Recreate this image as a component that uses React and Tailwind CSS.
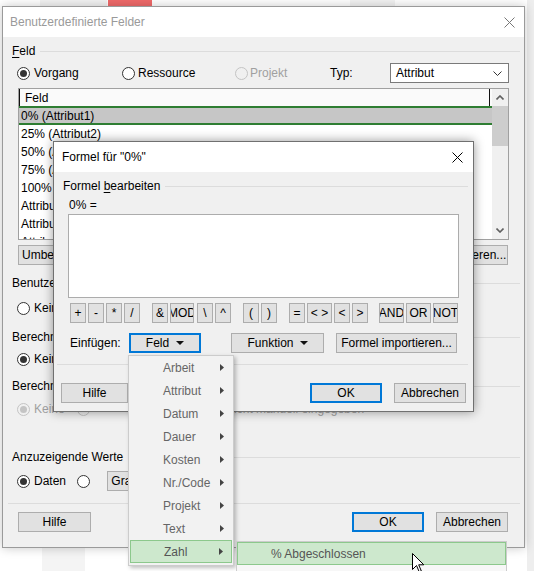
import React from "react";

const Radio = ({ checked, disabled }) => (
  <span
    className={
      "w-[13px] h-[13px] rounded-full border flex items-center justify-center shrink-0 " +
      (disabled ? "border-[#c4c4c4] bg-[#f0f0f0]" : "border-[#333333] bg-white")
    }
  >
    {checked && (
      <span className={"w-[7px] h-[7px] rounded-full " + (disabled ? "bg-[#c4c4c4]" : "bg-[#333333]")} />
    )}
  </span>
);

const Btn = ({ className = "", children, def }) => (
  <div
    className={
      "h-[20px] flex items-center justify-center bg-[#e1e1e1] shrink-0 whitespace-nowrap overflow-hidden text-black " +
      (def ? "border-2 border-[#0078d7] " : "border border-[#adadad] ") +
      className
    }
  >
    {children}
  </div>
);

const Group = ({ children }) => (
  <div className="h-[14px] flex items-center">
    <span className="whitespace-nowrap">{children}</span>
    <div className="flex-1 h-px bg-[#dcdcdc] ml-[5px]" />
  </div>
);

const CloseX = ({ color }) => (
  <svg width="11" height="11" viewBox="0 0 11 11">
    <path d="M0.5 0.5 L10.5 10.5 M10.5 0.5 L0.5 10.5" stroke={color} strokeWidth="1" />
  </svg>
);

const Tri = () => (
  <svg width="4" height="7" viewBox="0 0 4 7">
    <path d="M0 0 L4 3.5 L0 7 Z" fill="#444444" />
  </svg>
);

const Down = () => (
  <svg width="8" height="4" viewBox="0 0 8 4">
    <path d="M0 0 L8 0 L4 4 Z" fill="#111111" />
  </svg>
);

const listRows = [
  "25% (Attribut2)",
  "50% (Attribut3)",
  "75% (Attribut4)",
  "100% (Attribut5)",
  "Attribut6",
  "Attribut7",
  "Attribut8",
];

const menuItems = ["Arbeit", "Attribut", "Datum", "Dauer", "Kosten", "Nr./Code", "Projekt", "Text"];

const ops = [
  ["+", 16, 0],
  ["-", 16, 2],
  ["*", 16, 2],
  ["/", 16, 2],
  ["&", 16, 12],
  ["MOD", 24, 2],
  ["\\", 16, 3],
  ["^", 16, 2],
  ["(", 16, 12],
  [")", 16, 2],
  ["=", 16, 12],
  ["< >", 25, 2],
  ["<", 16, 2],
  [">", 16, 2],
  ["AND", 25, 11],
  ["OR", 25, 2],
  ["NOT", 25, 2],
];

export default function App() {
  return (
    <div className="relative w-[534px] h-[571px] overflow-hidden bg-white text-[12px] leading-none text-black font-['Liberation_Sans',Arial,sans-serif]">
      {/* desktop background bits */}
      <div className="absolute left-[40px] top-0 w-[67px] h-[6px] bg-[#f3f3f3]" />
      <div className="absolute left-[108px] top-0 w-[44px] h-[6px] bg-[#f06a6a]" />
      <div className="absolute left-[350px] top-0 w-[45px] h-[6px] bg-[#f3f3f3]" />
      <div className="absolute left-[527px] top-0 w-[7px] h-[571px] bg-[#eeeeee]" />
      <div className="absolute left-[42px] top-[548px] w-[43px] h-[23px] bg-[#f4f4f4]" />

      {/* outer dialog */}
      <div className="absolute left-[2px] top-[6px] w-[523px] h-[542px] border border-[#9a9a9a] bg-[#f0f0f0] shadow-[0_0_10px_rgba(0,0,0,0.22)] flex flex-col">
        <div className="h-[30px] bg-white flex items-center pl-[7px] shrink-0">
          <span className="text-[#9a9a9a]">Benutzerdefinierte Felder</span>
          <div className="ml-auto mr-[9px] flex">
            <CloseX color="#777777" />
          </div>
        </div>
        <div className="flex-1 pl-[9px] pr-[4px] flex flex-col">
          <div className="mt-[7px]">
            <Group>
              <span className="underline underline-offset-2">F</span>eld
            </Group>
          </div>

          <div className="mt-[8px] h-[14px] flex items-center">
            <div className="ml-[5px] w-[105px] flex items-center gap-[4px]">
              <Radio checked />
              <span>Vorgang</span>
            </div>
            <div className="w-[113px] flex items-center gap-[3px]">
              <Radio />
              <span>Ressource</span>
            </div>
            <div className="w-[95px] flex items-center gap-[2px]">
              <Radio disabled />
              <span className="text-[#a0a0a0]">Projekt</span>
            </div>
            <div className="w-[60px]">Typ:</div>
            <div className="w-[119px] h-[20px] border border-[#7a7a7a] bg-white flex items-center pl-[5px] pr-[6px]">
              <span>Attribut</span>
              <svg className="ml-auto" width="9" height="5" viewBox="0 0 9 5">
                <path d="M0.5 0.5 L4.5 4.5 L8.5 0.5" stroke="#333333" strokeWidth="1" fill="none" />
              </svg>
            </div>
          </div>

          {/* list */}
          <div className="mt-[8px] ml-[6px] w-[491px] h-[152px] border border-[#a0a0a0] bg-white flex overflow-hidden">
            <div className="w-[474px] flex flex-col">
              <div className="h-[17px] flex shrink-0 bg-[#fafafa]">
                <div className="w-[471px] border-l border-r border-[#111111] flex items-center pl-[5px]">Feld</div>
              </div>
              <div className="h-[19px] shrink-0 border-y-2 border-[#2e7d32] bg-[#c6c6c6] flex items-center pl-[2px]">
                0% (Attribut1)
              </div>
              {listRows.map((r) => (
                <div key={r} className="h-[18px] shrink-0 flex items-center pl-[2px]">
                  {r}
                </div>
              ))}
            </div>
            <div className="w-[16px] bg-[#f0f0f0] flex flex-col">
              <div className="h-[17px] flex items-center justify-center shrink-0">
                <svg width="8" height="5" viewBox="0 0 8 5">
                  <path d="M0.5 4.5 L4 1 L7.5 4.5" stroke="#606060" strokeWidth="1.6" fill="none" />
                </svg>
              </div>
              <div className="h-[40px] bg-[#cdcdcd] shrink-0" />
              <div className="flex-1" />
              <div className="h-[17px] flex items-center justify-center shrink-0">
                <svg width="8" height="5" viewBox="0 0 8 5">
                  <path d="M0.5 0.5 L4 4 L7.5 0.5" stroke="#606060" strokeWidth="1.6" fill="none" />
                </svg>
              </div>
            </div>
          </div>

          <div className="mt-[5px] h-[20px] flex">
            <Btn className="ml-[6px] w-[90px]">Umbenennen...</Btn>
            <Btn className="ml-auto mr-[12px] w-[100px]">Feld importieren...</Btn>
          </div>

          <div className="mt-[11px]">
            <Group>Benutzerdefinierte Attribute</Group>
          </div>
          <div className="mt-[11px] h-[14px] flex items-center ml-[5px] gap-[4px]">
            <Radio />
            <span>Keine</span>
          </div>

          <div className="mt-[15px]">
            <Group>Berechnung für Vorgangs- und Gruppensammelzeilen</Group>
          </div>
          <div className="mt-[8px] h-[14px] flex items-center ml-[5px]">
            <div className="w-[60px] flex items-center gap-[4px]">
              <Radio checked />
              <span>Keine</span>
            </div>
            <div className="w-[100px] flex items-center gap-[4px]">
              <Radio />
              <span>Rollup:</span>
            </div>
            <div className="flex items-center gap-[4px]">
              <Radio />
              <span>Formel verwenden</span>
            </div>
          </div>

          <div className="mt-[13px]">
            <Group>Berechnung für Zuordnungszeilen</Group>
          </div>
          <div className="mt-[9px] h-[14px] flex items-center ml-[5px] text-[#a0a0a0]">
            <div className="w-[60px] flex items-center gap-[4px]">
              <Radio checked disabled />
              <span>Keine</span>
            </div>
            <Radio disabled />
            <span className="ml-[60px]">Rollup, sofern nicht manuell eingegeben</span>
          </div>

          <div className="mt-[34px]">
            <Group>Anzuzeigende Werte</Group>
          </div>
          <div className="mt-[7px] h-[20px] flex items-center ml-[5px]">
            <div className="w-[60px] flex items-center gap-[4px]">
              <Radio checked />
              <span>Daten</span>
            </div>
            <Radio />
            <Btn className="ml-[17px] w-[120px]">Grafische Symbole...</Btn>
          </div>

          <div className="mt-[12px] h-px bg-[#dcdcdc] ml-[-4px]" />

          <div className="mt-[8px] h-[20px] flex">
            <Btn className="ml-[6px] w-[73px]">Hilfe</Btn>
            <Btn def className="ml-auto w-[72px]">OK</Btn>
            <Btn className="ml-[12px] mr-[12px] w-[72px]">Abbrechen</Btn>
          </div>
        </div>
      </div>

      {/* formula dialog */}
      <div className="absolute left-[53px] top-[141px] w-[421px] h-[271px] border border-[#707070] bg-[#f0f0f0] shadow-[0_0_10px_rgba(0,0,0,0.4)] flex flex-col">
        <div className="h-[30px] bg-white flex items-center pl-[8px] shrink-0">
          <span>Formel für "0%"</span>
          <div className="ml-auto mr-[10px] flex">
            <CloseX color="#000000" />
          </div>
        </div>
        <div className="flex-1 pl-[9px] pr-[5px] flex flex-col">
          <div className="mt-[7px]">
            <Group>
              Formel <span className="underline underline-offset-2">b</span>earbeiten
            </Group>
          </div>
          <div className="mt-[5px] h-[14px] flex items-center pl-[6px]">0% =</div>
          <div className="mt-[2px] ml-[5px] w-[391px] h-[84px] border border-[#acacac] bg-white" />
          <div className="mt-[5px] h-[20px] flex ml-[7px]">
            {ops.map(([t, w, m]) => (
              <div
                key={t}
                style={{ width: w, marginLeft: m }}
                className="h-[20px] flex items-center justify-center bg-[#e1e1e1] border border-[#adadad] overflow-hidden whitespace-nowrap shrink-0"
              >
                {t}
              </div>
            ))}
          </div>
          <div className="mt-[10px] h-[20px] flex items-center">
            <span className="ml-[7px] w-[59px]">Einfügen:</span>
            <Btn def className="w-[72px] gap-[7px]">
              <span>Feld</span>
              <Down />
            </Btn>
            <Btn className="ml-[30px] w-[93px] gap-[6px]">
              <span>Funktion</span>
              <Down />
            </Btn>
            <Btn className="ml-[12px] w-[121px]">Formel importieren...</Btn>
          </div>
          <div className="mt-[11px] h-px bg-[#dcdcdc] ml-[-6px]" />
          <div className="mt-[18px] h-[20px] flex">
            <Btn className="ml-[-2px] w-[67px]">Hilfe</Btn>
            <Btn def className="ml-auto w-[72px]">OK</Btn>
            <Btn className="ml-[12px] mr-[2px] w-[72px]">Abbrechen</Btn>
          </div>
        </div>
      </div>

      {/* field menu */}
      <div className="absolute left-[128px] top-[355px] w-[106px] h-[211px] bg-[#f2f2f2] border border-[#cccccc] shadow-[2px_2px_4px_rgba(0,0,0,0.25)] flex flex-col">
        {menuItems.map((m) => (
          <div key={m} className="h-[23px] shrink-0 flex items-center pl-[34px] pr-[9px] text-[#666666]">
            <span>{m}</span>
            <span className="ml-auto flex">
              <Tri />
            </span>
          </div>
        ))}
        <div className="h-[23px] shrink-0 mx-[1px] flex items-center pl-[33px] pr-[8px] bg-[#cde8cd] border border-[#8cc88c] text-[#555555]">
          <span>Zahl</span>
          <span className="ml-auto flex">
            <Tri />
          </span>
        </div>
      </div>

      {/* submenu */}
      <div className="absolute left-[236px] top-[541px] w-[271px] h-[40px] bg-[#f7f7f7] border border-[#cccccc] flex flex-col">
        <div className="h-[23px] shrink-0 flex items-center pl-[33px] bg-[#cde8cd] border border-[#8cc88c] text-[#555555]">
          % Abgeschlossen
        </div>
      </div>

      {/* mouse cursor */}
      <svg className="absolute left-[412px] top-[553px]" width="13" height="20" viewBox="0 0 13 20">
        <path
          d="M0.5 0.5 L0.5 16.5 L4.5 12.5 L7.2 18.8 L9.3 17.9 L6.7 11.8 L11.8 11.8 Z"
          fill="#ffffff"
          stroke="#000000"
          strokeWidth="1"
        />
      </svg>
    </div>
  );
}
